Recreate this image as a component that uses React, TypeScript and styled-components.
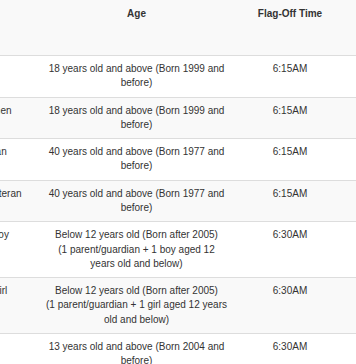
import React from "react";
import styled, { createGlobalStyle } from "styled-components";

const Global = createGlobalStyle`
  html, body {
    margin: 0;
    padding: 0;
    background: #ffffff;
    overflow: hidden;
  }
  body {
    font-family: "Liberation Sans", Arial, sans-serif;
    font-size: 10px;
    line-height: 1.42857;
    color: #333333;
  }
`;

const Viewport = styled.div`
  width: 356px;
  height: 364px;
  overflow: hidden;
`;

const Table = styled.table`
  margin-left: -62px;
  width: 418px;
  table-layout: fixed;
  border-collapse: collapse;
  border-spacing: 0;
`;

const Col = styled.col<{ $w: number }>`
  width: ${(p) => p.$w}px;
`;

const HeadCell = styled.th<{ $align?: string }>`
  height: 42px;
  padding: 7px 6px 6px;
  vertical-align: top;
  text-align: ${(p) => p.$align || "center"};
  font-weight: bold;
  color: #333333;
  background: #f9f9f9;
  border-bottom: 1px solid #dddddd;
`;

const TimeHead = styled(HeadCell)`
  padding-right: 15px;
`;

const Row = styled.tr<{ $striped: boolean }>`
  background: ${(p) => (p.$striped ? "#f9f9f9" : "#ffffff")};
  border-top: 1px solid #dddddd;
`;

const Cell = styled.td`
  padding: 6px;
  vertical-align: top;
  text-align: center;
`;

const CategoryCell = styled(Cell)`
  padding-left: 12px;
  text-align: left;
`;

const TimeCell = styled(Cell)`
  padding-right: 15px;
`;

const rows = [
  { cat: "Open Men", age: ["18 years old and above (Born 1999 and before)"], time: "6:15AM" },
  { cat: "Open Women", age: ["18 years old and above (Born 1999 and before)"], time: "6:15AM" },
  { cat: "Men Veteran", age: ["40 years old and above (Born 1977 and before)"], time: "6:15AM" },
  { cat: "Women Veteran", age: ["40 years old and above (Born 1977 and before)"], time: "6:15AM" },
  {
    cat: "Parent & Boy",
    age: ["Below 12 years old (Born after 2005)", "(1 parent/guardian + 1 boy aged 12 years old and below)"],
    time: "6:30AM",
  },
  {
    cat: "Parent & Girl",
    age: ["Below 12 years old (Born after 2005)", "(1 parent/guardian + 1 girl aged 12 years old and below)"],
    time: "6:30AM",
  },
  { cat: "Teens", age: ["13 years old and above (Born 2004 and before)"], time: "6:30AM" },
];

export default function App() {
  return (
    <>
      <Global />
      <Viewport>
        <Table>
          <colgroup>
            <Col $w={102} />
            <Col $w={193} />
            <Col $w={123} />
          </colgroup>
          <thead>
            <tr>
              <HeadCell $align="left">Category</HeadCell>
              <HeadCell>Age</HeadCell>
              <TimeHead>Flag-Off Time</TimeHead>
            </tr>
          </thead>
          <tbody>
            {rows.map((r, i) => (
              <Row key={i} $striped={i % 2 === 1}>
                <CategoryCell>{r.cat}</CategoryCell>
                <Cell>
                  {r.age.map((line, j) => (
                    <React.Fragment key={j}>
                      {j > 0 && <br />}
                      {line}
                    </React.Fragment>
                  ))}
                </Cell>
                <TimeCell>{r.time}</TimeCell>
              </Row>
            ))}
          </tbody>
        </Table>
      </Viewport>
    </>
  );
}
